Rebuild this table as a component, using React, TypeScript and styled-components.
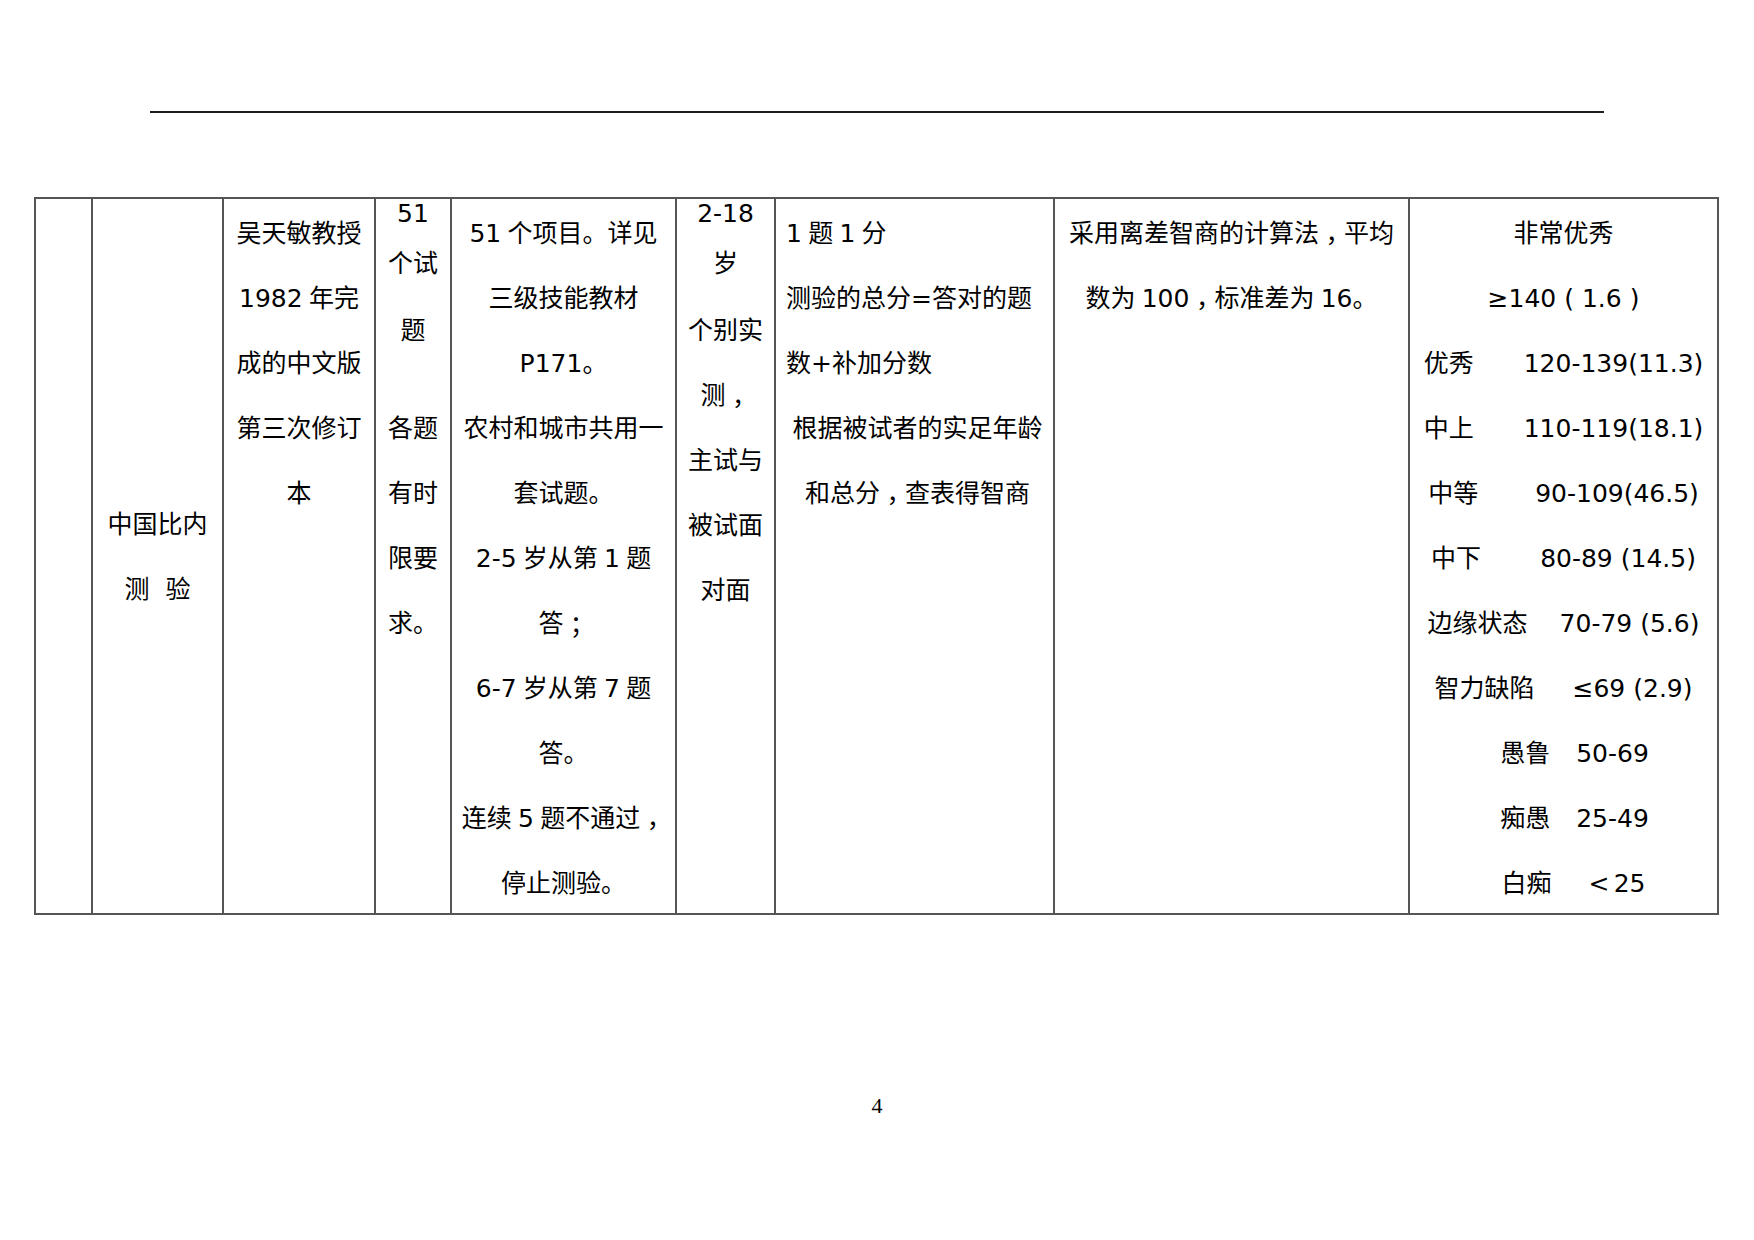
import styled, {createGlobalStyle} from "styled-components";

const GlobalStyle = createGlobalStyle`
    html, body {
        margin: 0;
        padding: 0;
        background: #fff;
    }
    body {
        font-family: "DejaVu Sans", "Noto Sans CJK SC", sans-serif;
        color: #000;
    }
`

const Page = styled.div`
    width: 1754px;
    height: 1240px;
    box-sizing: border-box;
    padding-top: 111px;
    display: flex;
    flex-direction: column;
`

const HeaderRule = styled.div`
    height: 2px;
    margin: 0 150px;
    background: #1c1c1c;
`

const Sheet = styled.div`
    margin: 84px 0 0 34px;
    width: 1685px;
    box-sizing: border-box;
    display: grid;
    grid-template-columns: 57px 131px 152px 76px 225px 99px 279px 355px 309px;
    grid-template-rows: 714px;
    border: 2px solid #555;
    border-right: none;
`

const Cell = styled.div<{ $align?: "left" | "center"; $middle?: boolean }>`
    box-sizing: border-box;
    border-right: 2px solid #555;
    padding: ${p => p.$align === "left" ? "1.5px 4px 0 10px" : "1.5px 2px 0"};
    display: flex;
    flex-direction: column;
    justify-content: ${p => p.$middle ? "center" : "flex-start"};
    text-align: ${p => p.$align ?? "center"};
    font-size: 25px;
    min-width: 0;
`

const Line = styled.div<{ $lh?: number; $h?: number; $center?: boolean }>`
    line-height: ${p => p.$lh ?? 65}px;
    height: ${p => p.$h ?? p.$lh ?? 65}px;
    white-space: pre;
    ${p => p.$center ? "text-align: center;" : ""}
`

// full-width punctuation set in the middle of its em box, sitting on the baseline
const Punct = styled.span<{ $drop?: number }>`
    display: inline-block;
    line-height: 1;
    font-family: "Noto Sans CJK TC", "Noto Sans CJK SC", sans-serif;
    position: relative;
    top: ${p => p.$drop ?? 0.34}em;
`

const Spacer = styled.div<{ $h: number }>`
    height: ${p => p.$h}px;
    flex-shrink: 0;
`

const GradeRow = styled.div<{ $gap: number; $shift?: number }>`
    display: flex;
    justify-content: center;
    gap: ${p => p.$gap}px;
    padding-left: ${p => (p.$shift ?? 0) * 2}px;
    line-height: 65px;
    height: 65px;
    white-space: pre;
`

const PageNumber = styled.div`
    margin-top: 178px;
    text-align: center;
    font-family: "Liberation Serif", serif;
    font-size: 22px;
    line-height: 25px;
`

const S = "\u2005"

const grades: { label: string; value: string; gap: number; shift?: number }[] = [
    {label: "优秀", value: "120-139(11.3)", gap: 50},
    {label: "中上", value: "110-119(18.1)", gap: 50},
    {label: "中等", value: "90-109(46.5)", gap: 57},
    {label: "中下", value: "80-89 (14.5)", gap: 59},
    {label: "边缘状态", value: "70-79 (5.6)", gap: 32},
    {label: "智力缺陷", value: "≤69 (2.9)", gap: 38},
    {label: "愚鲁", value: "50-69", gap: 26, shift: 11},
    {label: "痴愚", value: "25-49", gap: 26, shift: 11},
    {label: "白痴", value: "<\u2006" + "25", gap: 37, shift: 10},
]

const lines = (items: string[]) => items.map((t, i) => <Line key={i}>{t}</Line>)

export default function App() {
    return (<>
        <GlobalStyle/>
        <Page>
            <HeaderRule/>
            <Sheet>
                <Cell/>
                <Cell $middle>
                    {lines(["中国比内", "测\u00a0\u00a0验"])}
                </Cell>
                <Cell>
                    {lines(["吴天敏教授", `1982${S}年完`, "成的中文版", "第三次修订", "本"])}
                </Cell>
                <Cell>
                    <Line $lh={25} $h={29}>51</Line>
                    <Line $lh={68.5}>个试</Line>
                    <Line>题</Line>
                    <Spacer $h={32.5}/>
                    {lines(["各题", "有时", "限要", "求。"])}
                </Cell>
                <Cell>
                    {lines([
                        `51${S}个项目。详见`,
                        "三级技能教材",
                        "P171。",
                        "农村和城市共用一",
                        "套试题。",
                        `2-5${S}岁从第${S}1${S}题`,
                    ])}
                    <Line>答<Punct $drop={0.12}>；</Punct></Line>
                    {lines([`6-7${S}岁从第${S}7${S}题`, "答。"])}
                    <Line>连续{S}5{S}题不通过<Punct>，</Punct></Line>
                    <Line>停止测验。</Line>
                </Cell>
                <Cell>
                    <Line $lh={25} $h={29}>2-18</Line>
                    <Line $lh={68.5}>岁</Line>
                    <Line>个别实</Line>
                    <Line>测<Punct>，</Punct></Line>
                    {lines(["主试与", "被试面", "对面"])}
                </Cell>
                <Cell $align="left">
                    {lines([`1${S}题${S}1${S}分`, "测验的总分=答对的题", "数+补加分数"])}
                    <Line $center>根据被试者的实足年龄</Line>
                    <Line $center>和总分<Punct>，</Punct>查表得智商</Line>
                </Cell>
                <Cell>
                    <Line>采用离差智商的计算法<Punct>，</Punct>平均</Line>
                    <Line>数为{S}100<Punct>，</Punct>标准差为{S}16。</Line>
                </Cell>
                <Cell>
                    <Line>非常优秀</Line>
                    <Line>≥140 ( 1.6 )</Line>
                    {grades.map(g => (
                        <GradeRow key={g.label} $gap={g.gap} $shift={g.shift}>
                            <span>{g.label}</span>
                            <span>{g.value}</span>
                        </GradeRow>
                    ))}
                </Cell>
            </Sheet>
            <PageNumber>4</PageNumber>
        </Page>
    </>)
}
